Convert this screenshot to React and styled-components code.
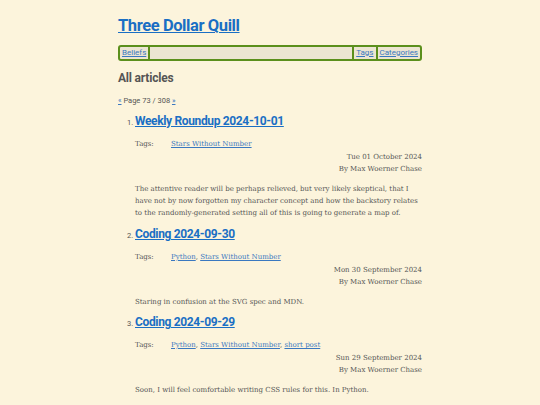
import styled, { createGlobalStyle } from 'styled-components';

const GlobalStyle = createGlobalStyle`
  html, body {
    margin: 0;
    padding: 0;
    background: #fcf4dc;
  }
  body {
    font-family: "DejaVu Serif", serif;
    color: #555;
  }
`;

const Page = styled.div`
  width: 304px;
  margin: 0 auto;
  padding-top: 15px;
`;

const SiteTitle = styled.h1`
  margin: 0;
  font-family: Roboto, "Open Sans", sans-serif;
  font-weight: 700;
  font-size: 16.5px;
  letter-spacing: -0.4px;
  line-height: 22px;
  a {
    color: #1a6fc4;
  }
`;

const Nav = styled.nav`
  display: flex;
  margin-top: 8px;
  height: 12px;
  border: 2px solid #5b8f1c;
  border-radius: 3px;
  background: #ece5d2;
  font-family: Roboto, "Open Sans", sans-serif;
  font-size: 8px;
  line-height: 12px;
`;

const NavItem = styled.a`
  color: #3a78c0;
  padding: 0 2px;
  border-left: ${(p) => (p.$left ? '2px solid #5b8f1c' : 'none')};
  border-right: ${(p) => (p.$right ? '2px solid #5b8f1c' : 'none')};
`;

const NavGap = styled.div`
  flex: 1;
`;

const SectionTitle = styled.h2`
  margin: 9px 0 0;
  font-family: Roboto, "Open Sans", sans-serif;
  font-size: 12px;
  letter-spacing: -0.2px;
  line-height: 16px;
  color: #555;
`;

const Pager = styled.p`
  margin: 10px 0 0;
  font-family: Roboto, "Open Sans", sans-serif;
  font-size: 7.5px;
  line-height: 10px;
  color: #555;
  a {
    color: #3a78c0;
  }
`;

const List = styled.ol`
  margin: 6px 0 0;
  padding-left: 17px;
  font-size: 7px;
  li::marker {
    font-family: Roboto, "Open Sans", sans-serif;
    font-size: 7.5px;
    color: #555;
  }
`;

const Item = styled.li`
  margin-bottom: 6px;
  &:nth-child(2) {
    margin-bottom: 5px;
  }
`;

const PostTitle = styled.h3`
  margin: 0;
  font-family: Roboto, "Open Sans", sans-serif;
  font-size: 12px;
  letter-spacing: -0.35px;
  line-height: 18px;
  a {
    color: #1a6fc4;
  }
`;

const Meta = styled.div`
  margin-top: 8px;
  font-size: 7px;
  line-height: 12px;
`;

const TagRow = styled.div`
  display: flex;
  margin-bottom: 1px;
`;

const TagLabel = styled.span`
  width: 36px;
`;

const TagLink = styled.a`
  color: #3a78c0;
`;

const Byline = styled.div`
  text-align: right;
`;

const Summary = styled.p`
  margin: 8px 0 0;
  font-size: 7px;
  line-height: 12px;
`;

const posts = [
  {
    title: 'Weekly Roundup 2024-10-01',
    tags: ['Stars Without Number'],
    date: 'Tue 01 October 2024',
    summary:
      'The attentive reader will be perhaps relieved, but very likely skeptical, that I have not by now forgotten my character concept and how the backstory relates to the randomly-generated setting all of this is going to generate a map of.',
  },
  {
    title: 'Coding 2024-09-30',
    tags: ['Python', 'Stars Without Number'],
    date: 'Mon 30 September 2024',
    summary: 'Staring in confusion at the SVG spec and MDN.',
  },
  {
    title: 'Coding 2024-09-29',
    tags: ['Python', 'Stars Without Number', 'short post'],
    date: 'Sun 29 September 2024',
    summary: 'Soon, I will feel comfortable writing CSS rules for this. In Python.',
  },
];

export default function App() {
  return (
    <>
      <GlobalStyle />
      <Page>
        <SiteTitle>
          <a href="#">Three Dollar Quill</a>
        </SiteTitle>
        <Nav>
          <NavItem href="#" $right>Beliefs</NavItem>
          <NavGap />
          <NavItem href="#" $left $right>Tags</NavItem>
          <NavItem href="#">Categories</NavItem>
        </Nav>
        <SectionTitle>All articles</SectionTitle>
        <Pager>
          <a href="#">«</a> Page 73 / 308 <a href="#">»</a>
        </Pager>
        <List start={1}>
          {posts.map((post) => (
            <Item key={post.title}>
              <PostTitle>
                <a href="#">{post.title}</a>
              </PostTitle>
              <Meta>
                <TagRow>
                  <TagLabel>Tags:</TagLabel>
                  <span>
                    {post.tags.map((t, i) => (
                      <span key={t}>
                        {i > 0 && ', '}
                        <TagLink href="#">{t}</TagLink>
                      </span>
                    ))}
                  </span>
                </TagRow>
                <Byline>{post.date}</Byline>
                <Byline>By Max Woerner Chase</Byline>
              </Meta>
              <Summary>{post.summary}</Summary>
            </Item>
          ))}
        </List>
      </Page>
    </>
  );
}
